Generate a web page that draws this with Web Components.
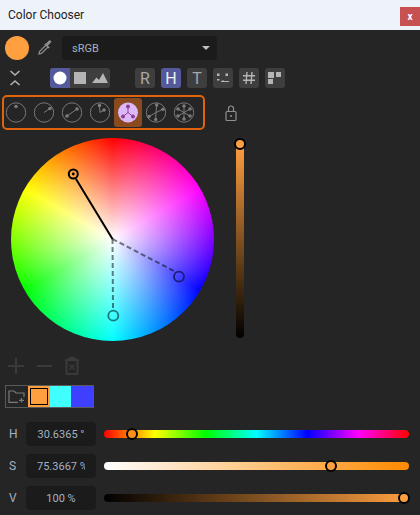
<!DOCTYPE html>
<html><head><meta charset="utf-8"><title>Color Chooser</title>
<style>html,body{margin:0;padding:0;background:#252525}</style></head><body>
<cc-app>
  <cc-title slot="title">Color Chooser</cc-title>
  <cc-row slot="r1" style="--gap:0px">
    <cc-swatch></cc-swatch>
    <cc-eyedropper></cc-eyedropper>
    <cc-select>sRGB</cc-select>
  </cc-row>
  <cc-toolbar slot="r2"></cc-toolbar>
  <cc-harmonies slot="r3"></cc-harmonies>
  <cc-picker slot="picker"></cc-picker>
  <cc-actions slot="actions"></cc-actions>
  <cc-palette slot="palette"></cc-palette>
  <cc-slider slot="sliders" label="H" value="30.6365 °" pos="28" track="linear-gradient(90deg,#f00 0%,#ff0 16.67%,#0f0 33.33%,#0ff 50%,#00f 66.67%,#f0f 83.33%,#f00 100%)"></cc-slider>
  <cc-slider slot="sliders" label="S" value="75.3667 %" pos="227" track="linear-gradient(90deg,#fff 0%,#ff8a00 100%)"></cc-slider>
  <cc-slider slot="sliders" label="V" value="100 %" pos="300" track="linear-gradient(90deg,#000 0%,#ff9f40 100%)"></cc-slider>
</cc-app>
<script>
function def(name, css, html){
  customElements.define(name, class extends HTMLElement{
    connectedCallback(){
      if(this.shadowRoot) return;
      const r=this.attachShadow({mode:'open'});
      r.innerHTML='<style>'+css+'</style>'+(typeof html==='function'?html(this):html);
    }
  });
}
const FONT='Roboto,"Open Sans",sans-serif';
def('cc-app',`:host{display:flex;flex-direction:column;width:420px;height:515px;background:#252525;overflow:hidden;font-family:${FONT}}
 .s{display:flex;flex-direction:column;gap:8px;margin-top:14px;}
 .r1{margin-top:6px}.r2{margin-top:8px}.r3{margin-top:7px}.p{margin-top:8px}.a{margin-top:15px}.pa{margin-top:9px}`,
 `<slot name="title"></slot><div class="r1"><slot name="r1"></slot></div><div class="r2"><slot name="r2"></slot></div><div class="r3"><slot name="r3"></slot></div><div class="p"><slot name="picker"></slot></div><div class="a"><slot name="actions"></slot></div><div class="pa"><slot name="palette"></slot></div><div class="s"><slot name="sliders"></slot></div>`);
def('cc-title',`:host{display:flex;align-items:center;justify-content:space-between;height:30px;background:#eef3fa;color:#222;font:12px ${FONT}}
 .t{padding-left:8px}.x{width:20px;height:19px;background:#c75050;color:#fff;font:bold 10px ${FONT};display:flex;align-items:center;justify-content:center;align-self:flex-start;margin-top:7px}`,
 `<span class="t"><slot></slot></span><span class="x">x</span>`);
def('cc-row',`:host{display:flex;align-items:center;padding-left:5px;gap:var(--gap,0)}`,`<slot></slot>`);
def('cc-swatch',`:host{display:block;width:24px;height:24px;border-radius:50%;background:#ff9f3f}`,``);
def('cc-eyedropper',`:host{display:block;width:16px;height:16px;margin:0 9px 0 8px}svg{display:block}`,
 `<svg width="16" height="16" viewBox="0 0 16 16" fill="none" stroke="#8c8c8c" stroke-width="1.300"><path d="M9 5 2.500 11.500 2 14l2.500-.5L11 7"/><path d="M8 3.800 12.200 8" stroke-width="1.700"/><path d="M10 6l3.500-3.500a1 1 0 0 0-1.500-1.500L8.700 4.500" fill="#8c8c8c" stroke-width="1"/></svg>`);
def('cc-select',`:host{display:flex;align-items:center;justify-content:space-between;box-sizing:border-box;width:155px;height:24px;background:#1b1b1b;border-radius:4px;padding:0 5px 0 10px;color:#a3b2c2;font:11px ${FONT}}
 i{width:0;height:0;border:4px solid transparent;border-top:4px solid #c0c0c0;border-bottom:0;margin-right:2px}`,`<slot></slot><i></i>`);
def('cc-btn',`:host{display:flex;align-items:center;justify-content:center;width:20px;height:20px;border-radius:3px;background:#3e3e3e;color:#a8a8a8;font:16px ${FONT}}
 :host([on]){background:#53599b;color:#f0f0f0}svg{display:block}`,`<slot></slot>`);
def('cc-toolbar',`:host{display:flex;align-items:center;height:20px}
 .c{width:20px;height:20px;margin-left:5px}
 .g{display:flex;width:60px;height:20px;margin-left:25px;background:#3e3e3e;border-radius:3px;overflow:hidden}
 .g span{width:20px;height:20px;display:flex;align-items:center;justify-content:center}
 .g .on{background:#53599b}
 .b{display:flex;gap:6px;margin-left:25px}`,
 `<svg class="c" viewBox="0 0 20 20" fill="none" stroke="#b0b0b0" stroke-width="1.600"><path d="M5.500 3 10 7l4.500-4"/><path d="M5.500 17 10 13l4.500 4"/></svg>
 <div class="g"><span class="on"><svg width="14" height="14"><circle cx="7" cy="7" r="6.500" fill="#fff"/></svg></span><span><svg width="12" height="12"><rect width="12" height="12" fill="#b5b5b5"/></svg></span><span><svg width="16" height="10" viewBox="0 0 16 10"><path d="M0 10 4.500 4.500 7 7 11 0 16 10Z" fill="#b5b5b5"/></svg></span></div>
 <div class="b"><cc-btn>R</cc-btn><cc-btn on>H</cc-btn><cc-btn>T</cc-btn>
 <cc-btn><svg width="14" height="12" viewBox="0 0 14 12" stroke="#b5b5b5" fill="#b5b5b5"><rect x="1" y="1.500" width="2.500" height="2.500" stroke="none"/><rect x="9.500" y="1.500" width="2.500" height="2.500" stroke="none"/><rect x="1" y="7" width="2.500" height="1.500" stroke="none"/><path d="M5 9.500h8M7 8v2" stroke-width="1" fill="none"/></svg></cc-btn>
 <cc-btn><svg width="14" height="14" viewBox="0 0 14 14" stroke="#b5b5b5" stroke-width="1.400" fill="none"><path d="M5 1 4 13M10 1 9 13M1 4.800h12M1 9.200h12"/></svg></cc-btn>
 <cc-btn><svg width="14" height="14" viewBox="0 0 14 14" fill="#b5b5b5"><rect x="0" y="1" width="6" height="6"/><rect x="8" y="1" width="5" height="5"/><rect x="0" y="8" width="5" height="5"/></svg></cc-btn></div>`);
def('cc-hicon',`:host{display:block;width:28px;height:29px;flex:none}:host([on]){background:#8a4a20;border-radius:3px}svg{display:block}`,
 (h)=>{
  const on=h.hasAttribute('on');
  const parse=s=>(s||'').trim().split(/\s*,\s*/).filter(Boolean).map(p=>p.split(' ').map(Number));
  const pts=parse(h.getAttribute('nodes'));
  const c=on?'#8e3f8e':'#7c7c7c';
  const lines=h.hasAttribute('nolines')?'':pts.map(p=>`<line x1="14" y1="14.500" x2="${p[0]}" y2="${p[1]}" stroke="${c}" stroke-width="1"/>`).join('');
  const dots=pts.map(p=>`<circle cx="${p[0]}" cy="${p[1]}" r="${h.getAttribute('d')||1.800}" fill="${c}"/>`).join('');
  const cc=on?`<circle cx="14" cy="14.500" r="10" fill="#dcb8fa"/>`:`<circle cx="14" cy="14.500" r="9.700" fill="none" stroke="#777" stroke-width="1"/>`;
  return `<svg width="28" height="29">${cc}${lines}${dots}</svg>`;
 });
def('cc-harmonies',`:host{display:flex;align-items:center}
 .box{box-sizing:border-box;display:flex;align-items:center;width:203px;height:35px;margin-left:2px;border:2px solid #e0640c;border-radius:5px}
 .in{display:flex;margin-left:-2px}
 .lock{margin-left:18px;display:block}`,
 `<div class="box"><div class="in">
 <cc-hicon nodes="14 8.500" nolines></cc-hicon>
 <cc-hicon nodes="20 10.500"></cc-hicon>
 <cc-hicon nodes="19 11,9 18"></cc-hicon>
 <cc-hicon nodes="13.500 7.500,18 12"></cc-hicon>
 <cc-hicon on nodes="14 8.500,9 18.500,19 18.500" d="2"></cc-hicon>
 <cc-hicon nodes="14.700 7,21 11.200,7 18.500,13.700 21.500" d="1.700"></cc-hicon>
 <cc-hicon nodes="14 8,20 11,20 18,14 21,8 18,8 11" d="1.800"></cc-hicon>
 </div></div>
 <svg class="lock" width="16" height="18" viewBox="0 0 16 18" fill="none" stroke="#8f8f8f" stroke-width="1.200"><rect x="3" y="7.500" width="10" height="9" rx="1"/><path d="M5.500 7.500V4.500a2.500 2.500 0 0 1 5 0v3"/><circle cx="8" cy="12" r="1" fill="#8f8f8f" stroke="none"/></svg>`);
def('cc-picker',`:host{display:flex;height:203px}
 .w{position:relative;width:203px;height:203px;margin-left:11px;border-radius:50%;background:radial-gradient(closest-side,#fff,rgba(255,255,255,0)),conic-gradient(#f00,#f0f,#00f,#0ff,#0f0,#ff0,#f00)}
 .o{position:absolute;left:0;top:0}
 .v{position:relative;width:8px;height:194px;margin:6px 0 0 22px;border-radius:4px;background:linear-gradient(180deg,#ff9f40,#000)}
 .k{position:absolute;left:-2px;top:-6px;width:8px;height:8px;box-sizing:content-box;border:2px solid #000;border-radius:50%;background:#ff9f40}`,
 `<div class="w"><svg class="o" width="203" height="203" fill="none">
 <path d="M101.500 101 65 41" stroke="#000" stroke-width="2"/>
 <path d="M101.500 101 163 133" stroke="#000" stroke-opacity=".5" stroke-width="2" stroke-dasharray="5 3"/>
 <path d="M101.500 101 102 172" stroke="#000" stroke-opacity=".5" stroke-width="2" stroke-dasharray="5 3"/>
 <circle cx="62.300" cy="36" r="4.500" stroke="#000" stroke-width="2"/><circle cx="62.300" cy="36" r="1.400" fill="#000"/>
 <circle cx="168" cy="138.700" r="5" stroke="#1b1b7a" stroke-width="1.800"/>
 <circle cx="102.300" cy="177.700" r="5" stroke="#137a7a" stroke-width="1.800"/>
 </svg></div><div class="v"><div class="k"></div></div>`);
def('cc-actions',`:host{display:flex;align-items:center;height:20px;padding-left:8px}svg{display:block}`,
 `<svg width="16" height="16" stroke="#3a3a3a" stroke-width="2"><path d="M8 0v16M0 8h16"/></svg>
 <svg width="15" height="16" stroke="#3a3a3a" stroke-width="2" style="margin-left:13px"><path d="M0 8h15"/></svg>
 <svg width="14" height="18" viewBox="0 0 14 18" fill="none" stroke="#3a3a3a" stroke-width="2" style="margin-left:13px"><path d="M0 3h14M4.500 3V1h5v2M1.500 3V17h11V3"/><path d="M4.500 7.500l5 5M9.500 7.500l-5 5" stroke-width="1.500"/></svg>`);
def('cc-palette',`:host{display:flex;box-sizing:border-box;width:89px;height:23px;margin-left:5px;border:1px solid #5a5a5a}
 .f{width:22px;display:flex;align-items:center;justify-content:center}
 .c{height:21px;box-sizing:border-box}
 .s{width:22px;background:#ff9f3f;outline:1px solid #000;outline-offset:-3px}`,
 `<div class="f"><svg width="18" height="13" viewBox="0 0 18 13" fill="none" stroke="#7a7a7a" stroke-width="1.200"><path d="M10 12.400H1V1h5l2 2h8v4"/><path d="M13.500 8v4.500M11 10.300h5" stroke-width="1.300"/></svg></div>
 <div class="c s"></div><div class="c" style="background:#3fffff;width:21px"></div><div class="c" style="background:#3f3fff;width:22px"></div>`);
def('cc-slider',`:host{display:flex;align-items:center;height:24px;color:#a3b2c2;font:11px ${FONT}}
 .l{width:26px;box-sizing:border-box;padding-left:9px;font-size:12px}
 .i{box-sizing:border-box;width:70px;height:24px;background:#1b1b1b;border-radius:4px;display:flex;align-items:center;justify-content:center;padding:0 11px}
 .i span{display:block;width:48px;overflow:hidden;white-space:nowrap;text-align:center}
 .t{position:relative;width:305px;height:8px;margin-left:8px;border-radius:4px}
 .k{position:absolute;top:-2px;width:8px;height:8px;box-sizing:content-box;border:2px solid #000;border-radius:50%;margin-left:-6px}`,
 (h)=>{
  const p=h.getAttribute('pos');
  const colors={H:'#ff8e1a',S:'#ffa040',V:'#ff9f40'};
  const l=h.getAttribute('label');
  return `<div class="l">${l}</div><div class="i"><span>${h.getAttribute('value')}</span></div><div class="t" style="background:${h.getAttribute('track')}"><div class="k" style="left:${p}px;background:${colors[l]}"></div></div>`;
 });
</script>
</body></html>
